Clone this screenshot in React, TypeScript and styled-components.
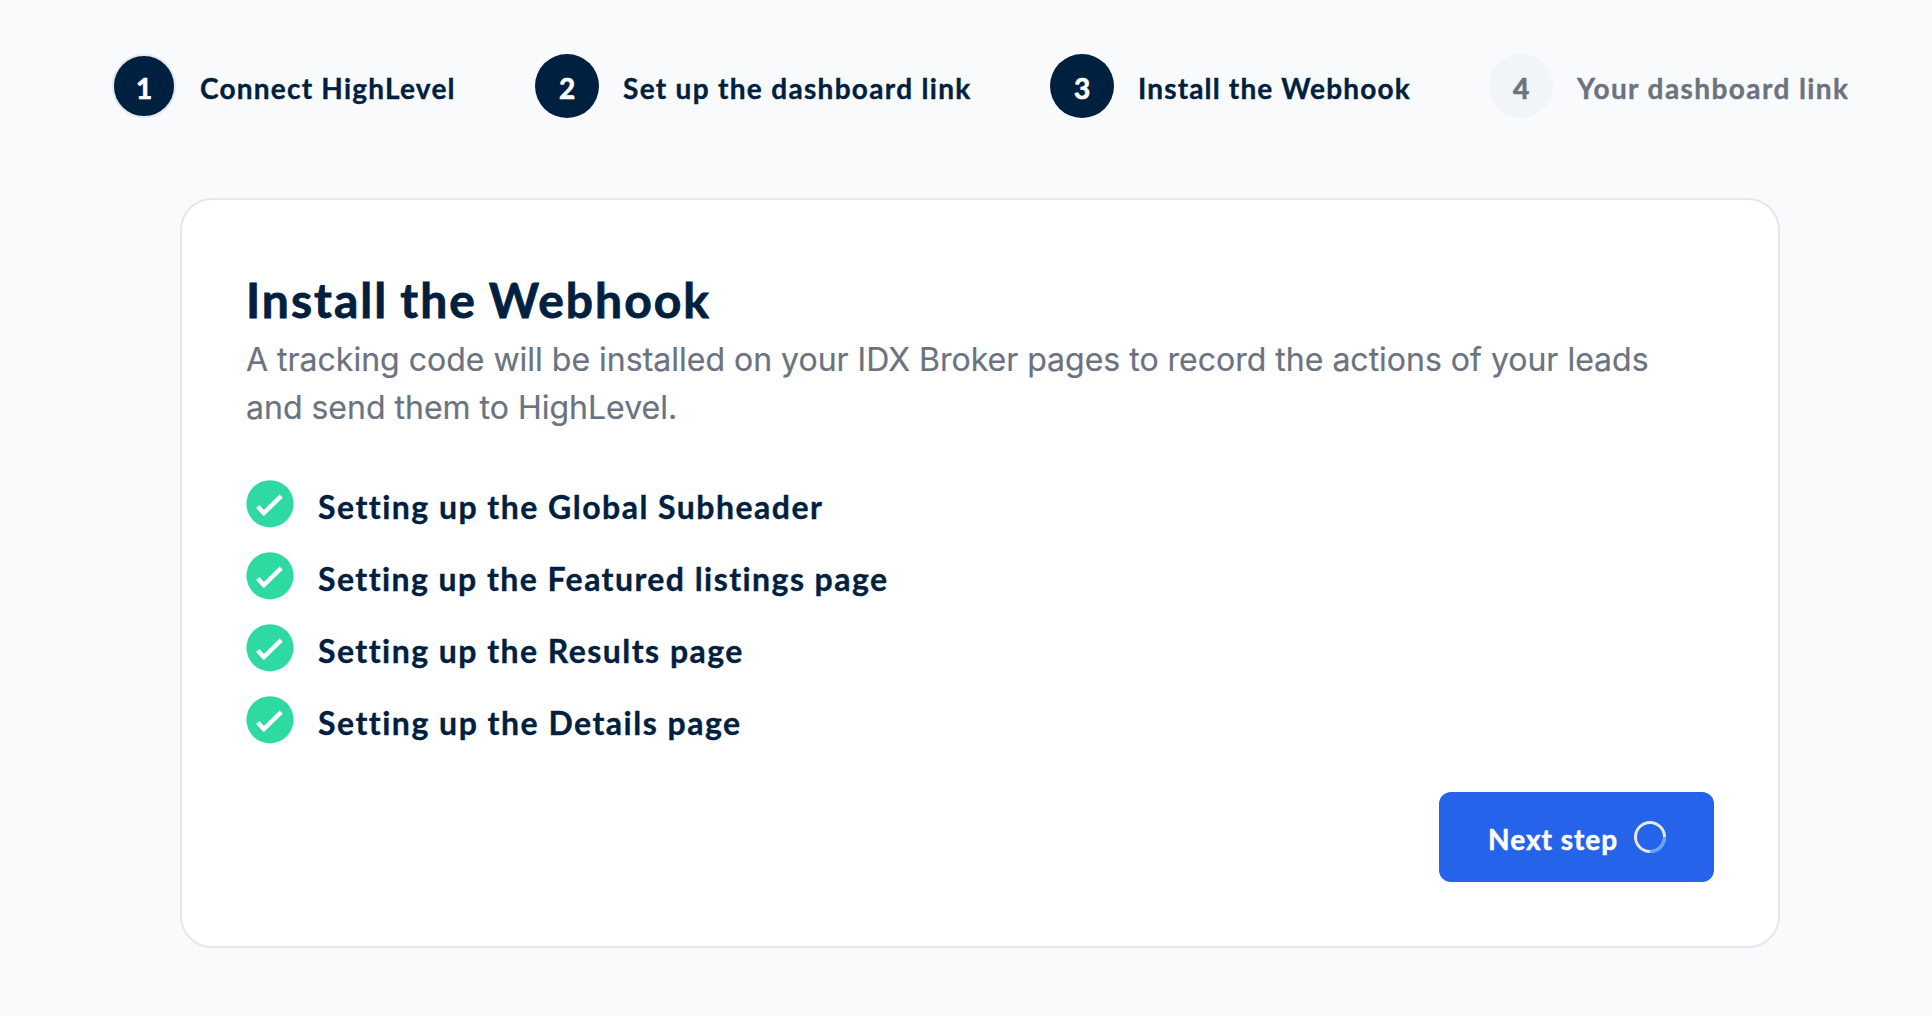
import styled, { createGlobalStyle, css } from "styled-components";

const GlobalStyle = createGlobalStyle`
  * {
    box-sizing: border-box;
  }
  body {
    margin: 0;
    background-color: #f9fafc;
    color: #002040;
    font-family: Lato, "Liberation Sans", sans-serif;
  }
`;

const StyledPage = styled.main`
  min-height: 1016px;
  padding: 54px 0 68px;
`;

const StyledSteps = styled.ol`
  display: flex;
  gap: 80px;
  margin: 0;
  padding: 0 0 0 112px;
  list-style: none;
`;

const StyledStep = styled.li<{ $pending?: boolean }>`
  display: flex;
  align-items: center;
  gap: 24px;
  height: 64px;
  font-size: 28px;
  font-weight: 700;
  line-height: 42px;
  white-space: nowrap;
  -webkit-text-stroke: 0.35px currentColor;
  color: ${({ $pending }) => ($pending ? "#6b7280" : "#002040")};
`;

const StyledStepNumber = styled.span<{ $pending?: boolean; $ring?: boolean }>`
  display: flex;
  align-items: center;
  justify-content: center;
  width: 64px;
  height: 64px;
  padding-top: 3px;
  border-radius: 50%;
  background-color: ${({ $pending }) => ($pending ? "#f1f4f9" : "#002040")};
  color: ${({ $pending }) => ($pending ? "#6b7280" : "#fff")};
  -webkit-text-stroke: 0.7px currentColor;
  ${({ $ring }) =>
    $ring &&
    css`
      border: 2px solid #e5e7eb;
    `}
`;

const StyledStepLabel = styled.span<{ $width: number; $spacing: number }>`
  width: ${({ $width }) => $width}px;
  padding-top: 3px;
  letter-spacing: ${({ $spacing }) => $spacing}px;
`;

const StyledCard = styled.section`
  width: 1600px;
  height: 750px;
  margin: 80px 0 0 180px;
  padding: 64px;
  border: 2px solid #e5e7eb;
  border-radius: 32px;
  background-color: #fff;
`;

const StyledTitle = styled.h1`
  margin: 0;
  font-size: 48px;
  font-weight: 700;
  line-height: 72px;
  letter-spacing: 2px;
  word-spacing: -1.5px;
  -webkit-text-stroke: 0.8px currentColor;
`;

const StyledDescription = styled.p`
  margin: 0 0 48px;
  color: #6b7280;
  font-family: Inter, "Liberation Sans", sans-serif;
  font-size: 32px;
  line-height: 48px;
  -webkit-text-stroke: 0.2px currentColor;
`;

const StyledTasks = styled.ul`
  display: flex;
  flex-direction: column;
  gap: 24px;
  margin: 0 0 48px;
  padding: 0;
  list-style: none;
`;

const StyledTask = styled.li<{ $spacing: number }>`
  display: flex;
  align-items: center;
  gap: 24px;
  height: 48px;
  font-size: 32px;
  font-weight: 700;
  line-height: 48px;
  letter-spacing: ${({ $spacing }) => $spacing}px;
  -webkit-text-stroke: 0.35px currentColor;

  & > span {
    padding-top: 5px;
  }
`;

const StyledActions = styled.div`
  display: flex;
  justify-content: flex-end;
`;

const StyledButton = styled.button`
  display: flex;
  align-items: center;
  justify-content: space-between;
  width: 275px;
  height: 90px;
  padding: 0 48px 0 49px;
  border: 0;
  border-radius: 12px;
  background-color: #2563eb;
  color: #fff;
  font-family: inherit;
  font-size: 28px;
  font-weight: 700;
  line-height: 42px;
  letter-spacing: 1px;
  white-space: nowrap;
  -webkit-text-stroke: 0.5px currentColor;

  & > span {
    padding-top: 4px;
  }
`;

const steps = [
  { label: "Connect HighLevel", width: 255, spacing: 1.22 },
  { label: "Set up the dashboard link", width: 347, spacing: 1.31 },
  { label: "Install the Webhook", width: 271, spacing: 1.16 },
  { label: "Your dashboard link", width: 272, spacing: 1.42 },
];

const tasks = [
  { label: "Setting up the Global Subheader", spacing: 1.48 },
  { label: "Setting up the Featured listings page", spacing: 1.44 },
  { label: "Setting up the Results page", spacing: 1.46 },
  { label: "Setting up the Details page", spacing: 1.5 },
];

const CURRENT_STEP = 3;

function CheckIcon() {
  return (
    <svg width="48" height="48" viewBox="0 0 48 48" fill="none">
      <circle cx="24" cy="23.8" r="23.6" fill="#2edaa2" />
      <path d="M11.7 26.4L17.8 33L35.2 16.2" stroke="#fff" strokeWidth="4.4" />
    </svg>
  );
}

function Spinner() {
  return (
    <svg width="32" height="32" viewBox="0 0 32 32" fill="none">
      <circle cx="16" cy="16" r="14.5" stroke="#e5e7eb" strokeWidth="3" />
      <path d="M30.5 16A14.5 14.5 0 0 1 16 30.5" stroke="#60a5fa" strokeWidth="3" />
    </svg>
  );
}

export default function App() {
  return (
    <>
      <GlobalStyle />
      <StyledPage>
        <StyledSteps>
          {steps.map(({ label, width, spacing }, index) => {
            const pending = index + 1 > CURRENT_STEP;
            return (
              <StyledStep key={label} $pending={pending}>
                <StyledStepNumber $pending={pending} $ring={index === 0}>
                  {index + 1}
                </StyledStepNumber>
                <StyledStepLabel $width={width} $spacing={spacing}>
                  {label}
                </StyledStepLabel>
              </StyledStep>
            );
          })}
        </StyledSteps>

        <StyledCard>
          <StyledTitle>Install the Webhook</StyledTitle>
          <StyledDescription>
            A tracking code will be installed on your IDX Broker pages to record
            the actions of your leads and send them to HighLevel.
          </StyledDescription>
          <StyledTasks>
            {tasks.map(({ label, spacing }) => (
              <StyledTask key={label} $spacing={spacing}>
                <CheckIcon />
                <span>{label}</span>
              </StyledTask>
            ))}
          </StyledTasks>
          <StyledActions>
            <StyledButton type="button">
              <span>Next step</span>
              <Spinner />
            </StyledButton>
          </StyledActions>
        </StyledCard>
      </StyledPage>
    </>
  );
}
